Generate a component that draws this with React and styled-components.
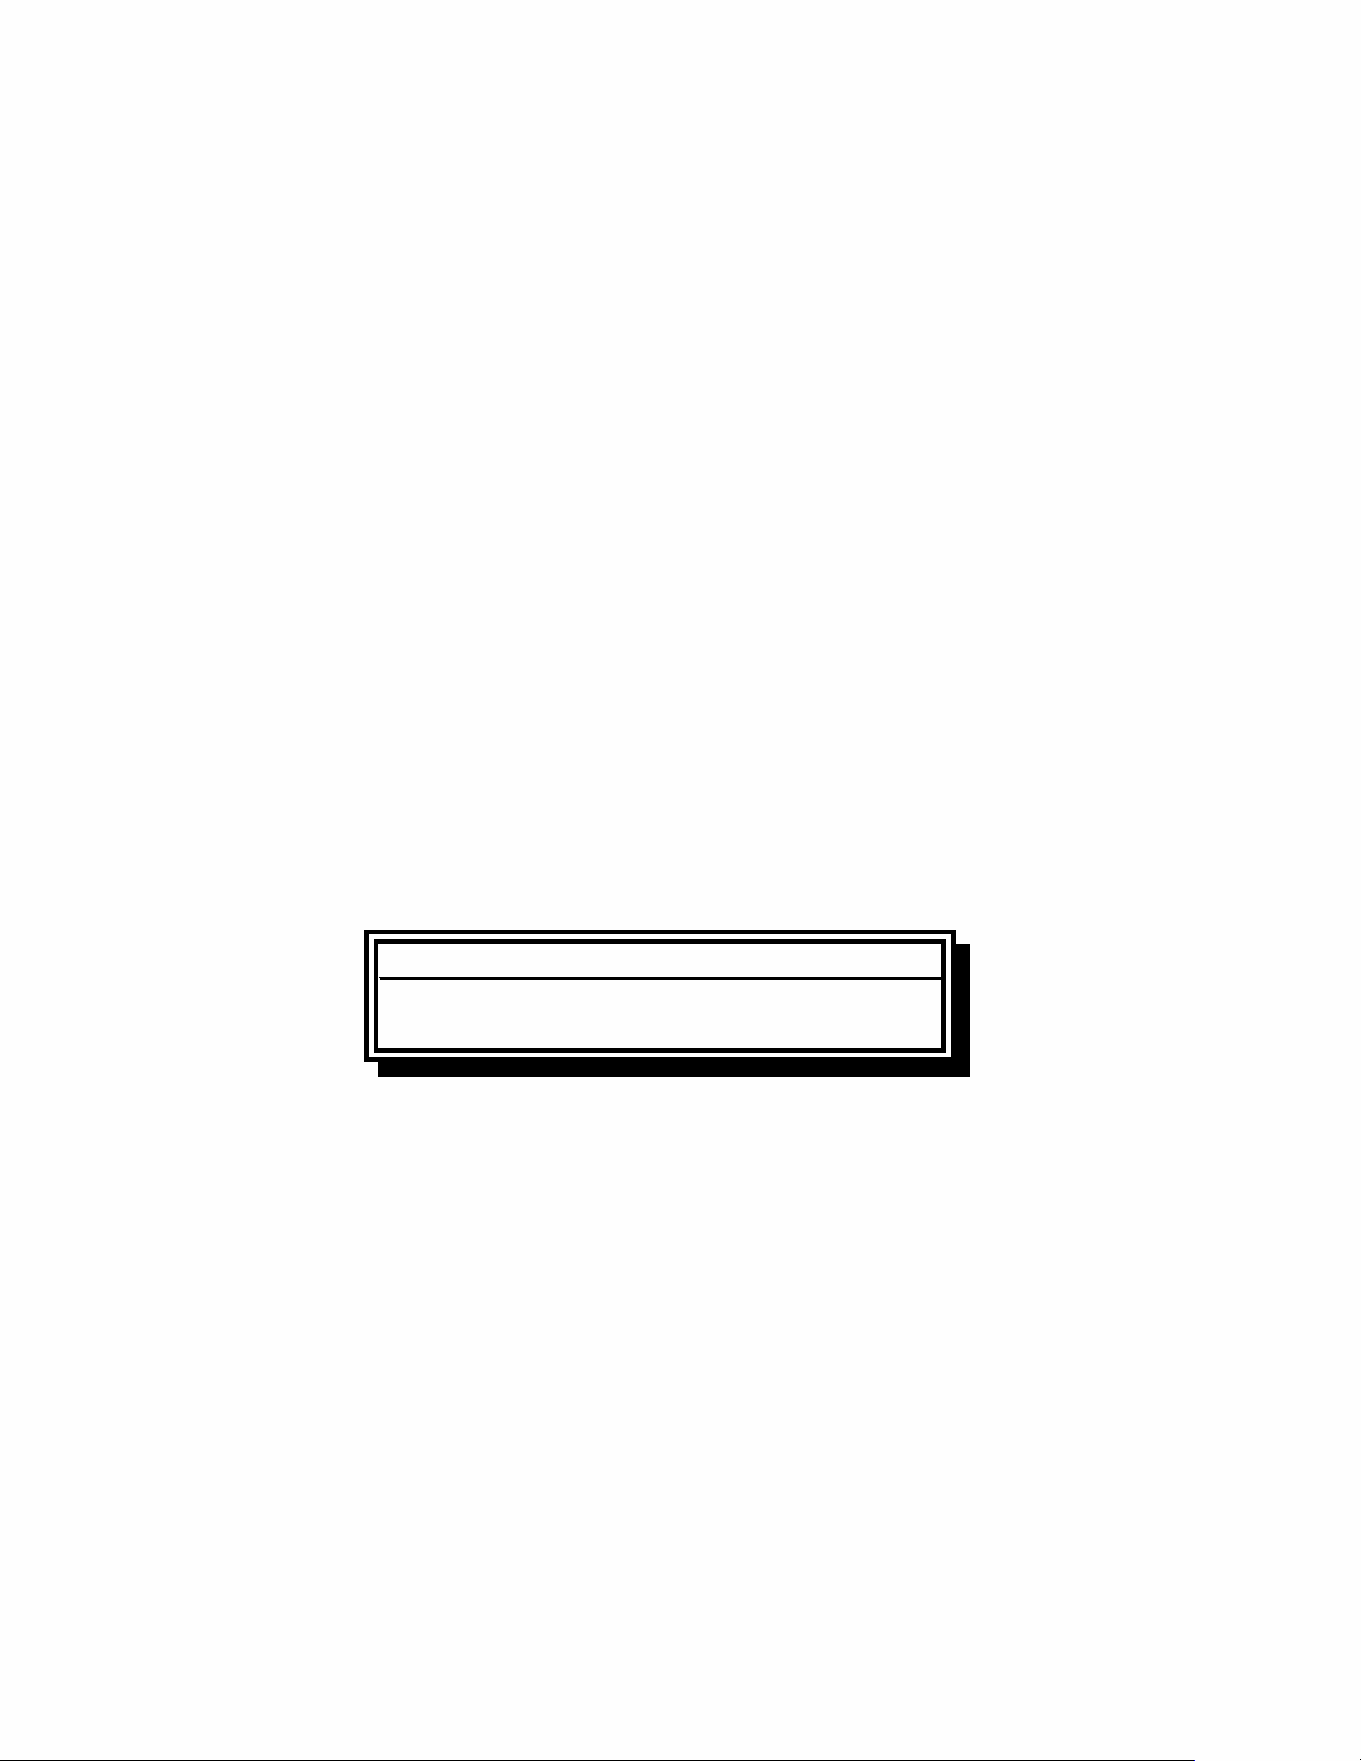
import React from "react";
import styled, { createGlobalStyle } from "styled-components";

const GlobalStyle = createGlobalStyle`
  *, *::before, *::after { box-sizing: border-box; }
  body {
    margin: 0;
    background: #fefefe;
    font-family: "Liberation Sans", sans-serif;
  }
`;

const Page = styled.div`
  display: flex;
  flex-direction: column;
  min-height: 100vh;
`;

const Stage = styled.main`
  flex: 1;
  padding: 930px 405px 0 364px;
`;

const Frame = styled.section`
  padding: 5px 5px 4px;
  border: 5px solid #000;
  border-top-width: 4px;
  background: #fefefe;
  box-shadow: 14px 14px #000, 14px 15px #000;
`;

const Panel = styled.div`
  border: 5px solid #000;
  border-left-width: 4px;
`;

/* The header and body borders join into one rule with a stepped left tip. */
const Header = styled.header`
  height: 34px;
  margin-left: 1px;
  border-bottom: 1px solid #000;
`;

const Body = styled.div`
  height: 70px;
  margin-left: 2px;
  border-top: 2px solid #000;
`;

const Footer = styled.footer`
  display: flex;
  justify-content: space-between;
  height: 2px;
`;

const Baseline = styled.div`
  align-self: flex-end;
  width: calc(100% - 166px);
  height: 1px;
  border-right: 1px solid #0000fe;
  background: #000;
`;

const EndMark = styled.div`
  width: 1px;
  height: 1px;
  background: #000;
`;

export default function App() {
  return (
    <Page>
      <GlobalStyle />
      <Stage>
        <Frame>
          <Panel>
            <Header />
            <Body />
          </Panel>
        </Frame>
      </Stage>
      <Footer>
        <Baseline />
        <EndMark />
      </Footer>
    </Page>
  );
}
